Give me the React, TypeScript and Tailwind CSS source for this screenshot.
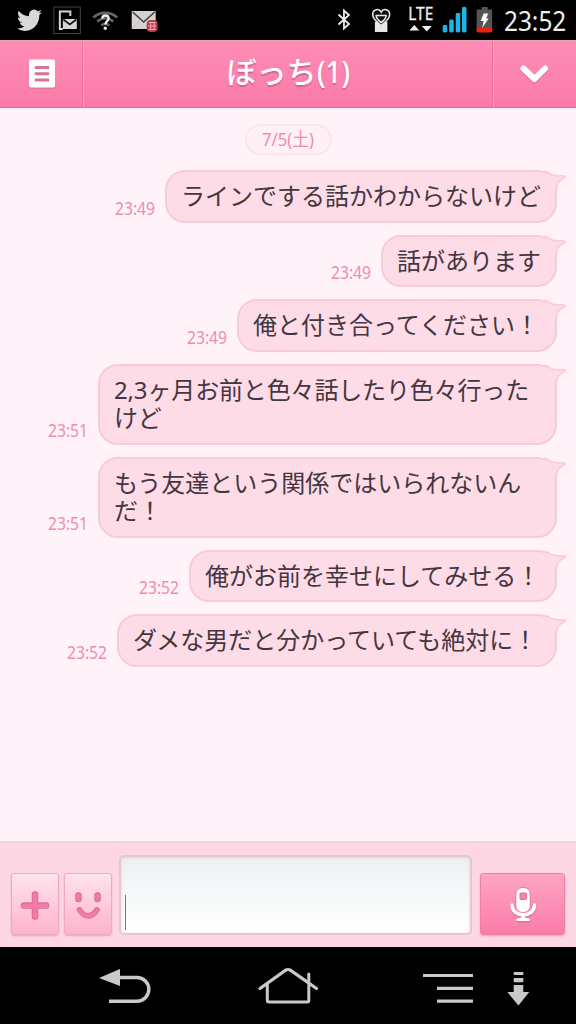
type Message = {
  time: string;
  text: string;
  size: string;
};

const messages: Message[] = [
  { time: "23:49", text: "ラインでする話かわからないけど", size: "w-[392px] h-[52.6px]" },
  { time: "23:49", text: "話があります", size: "w-[176px] h-[52.6px]" },
  { time: "23:49", text: "俺と付き合ってください！", size: "w-[320px] h-[52.6px]" },
  { time: "23:51", text: "2,3ヶ月お前と色々話したり色々行ったけど", size: "w-[459px] h-[81px] tracking-[-0.15px]" },
  { time: "23:51", text: "もう友達という関係ではいられないんだ！", size: "w-[459px] h-[81px]" },
  { time: "23:52", text: "俺がお前を幸せにしてみせる！", size: "w-[368px] h-[52.6px]" },
  { time: "23:52", text: "ダメな男だと分かっていても絶対に！", size: "w-[440px] h-[52.6px]" },
];

const StatusBar = () => {
  return (
    <div className="h-10 bg-black shrink-0 flex items-center text-white">
      <svg width="200" height="40" viewBox="0 0 200 40" fill="none">
        <g transform="translate(17 7.2) scale(1.04 1.09)">
          <path
            fill="#d9d9d9"
            d="M23.95 4.57a10 10 0 0 1-2.82.77 4.96 4.96 0 0 0 2.16-2.72c-.95.55-2 .95-3.13 1.18a4.92 4.92 0 0 0-8.38 4.48C7.69 8.1 4.07 6.13 1.64 3.16a4.93 4.93 0 0 0 1.52 6.57 4.9 4.9 0 0 1-2.23-.61v.06a4.92 4.92 0 0 0 3.95 4.83 5 5 0 0 1-2.21.08 4.94 4.94 0 0 0 4.6 3.42A9.87 9.87 0 0 1 0 19.54a14 14 0 0 0 7.55 2.21c9.05 0 14-7.5 14-13.98 0-.21 0-.42-.02-.63a9.94 9.94 0 0 0 2.42-2.57z"
          />
        </g>
        <rect x="54" y="7" width="26.500" height="26.500" stroke="#454545" />
        <path d="M70.500 16v-4.500H60v17.500h3" stroke="#d5d5d5" strokeWidth="2" />
        <path d="M63 19h14v10H63z" fill="#d5d5d5" />
        <path d="M63.500 19.500l6.500 5 6.500-5" stroke="#111" strokeWidth="1.600" />
        <g stroke="#666" strokeWidth="2.600">
          <path d="M93.500 17.500c7-6.200 17-6.200 24 0" />
          <path d="M97.500 21.500c5-4.300 11-4.300 16 0" />
          <path d="M101.500 25.500c2.500-2 5.500-2 8 0" />
        </g>
        <path d="M102.500 18.500c.2-4.200 6.600-4 6.400 0-.2 2.600-3.300 2.600-3.300 6" stroke="#eee" strokeWidth="2.400" />
        <circle cx="105.500" cy="28.300" r="1.700" fill="#eee" />
        <path d="M132 11h24v18h-24z" fill="#d6d2d2" />
        <path d="M133 12l11 10 11-10" stroke="#443b3d" strokeWidth="1.600" />
        <path d="M133 28l8-8M148 20l5 5" stroke="#bdb6b7" />
        <rect x="147" y="20" width="11" height="12" rx="4" fill="#b93c49" />
        <path d="M149 22.500h7M148.500 26h8M151 22v8M154.500 22v8M149 29.500h7" stroke="#f0b0b5" />
      </svg>
      <svg className="ml-[130px]" width="170" height="40" viewBox="330 0 170 40" fill="none">
        <path d="M338.500 14.500l10.500 9.500-5 4.500V10.500l5 4.500-10.500 9.500" stroke="#eee" strokeWidth="1.800" />
        <path d="M375 22h12.500v10H375z" fill="#e8e8e8" />
        <path d="M381.300 25.500c-3-2.500-8.500-6-8.500-11 0-5.500 6.500-6.500 8.500-2.500 2-4 8.500-3 8.500 2.500 0 5-5.500 8.500-8.500 11z" fill="#111" stroke="#e8e8e8" strokeWidth="1.600" />
        <path d="M381.300 22.500c-2-1.500-5-4-5-7h10c0 3-3 5.500-5 7z" stroke="#e8e8e8" strokeWidth="1.600" />
        <text x="408.500" y="20.500" fill="#eee" stroke="#eee" strokeWidth=".3" fontSize="18.500" textLength="25" lengthAdjust="spacingAndGlyphs" fontFamily="Noto Sans, sans-serif">
          LTE
        </text>
        <path d="M409.500 30.500l5-5.500 5 5.500zM422 26h10l-5 5.500z" fill="#eee" />
        <g fill="#1eb6e6">
          <rect x="443" y="25" width="4.500" height="7.500" rx="1.500" />
          <rect x="449.500" y="19.500" width="4.500" height="13" rx="1.500" />
          <rect x="456" y="13" width="4.500" height="19.500" rx="1.500" />
          <rect x="462.300" y="7" width="4.500" height="25.500" rx="1.500" />
        </g>
        <path d="M482 7h6v2.500h4.500V32H477V9.500h5z" fill="#555" />
        <path d="M477 27.500h15.500v3q0 2-2 2H479q-2 0-2-2z" fill="#ee220c" />
        <path d="M484 13.500h4.500l-2 5h2.500l-6.500 9.500 1.500-7h-3z" fill="#fff" />
      </svg>
      <div className="w-[72px] ml-[5px] text-[28px] leading-10 origin-left scale-x-[0.87] whitespace-nowrap text-[#eeeeee]">
        23:52
      </div>
    </div>
  );
};

const Header = () => {
  return (
    <header className="h-[68px] shrink-0 flex bg-linear-to-b from-[#fe8db6] to-[#fa7aa8] border-t border-t-[#e9a0bb] border-b border-b-[#e06f98]">
      <div className="w-[83px] border-r border-[#e9739d] flex items-center justify-center">
        <svg className="ml-px" width="28" height="32" viewBox="0 0 28 32">
          <rect x="1" y="3" width="26" height="28" rx="2" fill="#dc668f" opacity=".5" />
          <rect x="1" y="1.500" width="26" height="28" rx="2" fill="#fff" />
          <path d="M8 9.500h12M8 15.800h12M8 22.100h12" stroke="#dc7099" strokeWidth="3" strokeLinecap="round" />
        </svg>
      </div>
      <h1 className="flex-1 border-x border-l-[#ff9dc1] border-r-[#e9739d] text-center text-[30px] leading-[62px] font-medium text-white whitespace-nowrap [text-shadow:0_2px_1px_#cf6690]">
        ぼっち<span className="inline-block scale-x-[0.92] origin-left -mr-[3px]">(1)</span>
      </h1>
      <div className="w-[83px] border-l border-[#ff9dc1] flex items-center justify-center">
        <svg width="32" height="24" viewBox="0 0 32 24" fill="none" strokeWidth="6" strokeLinecap="round" strokeLinejoin="round">
          <path d="M4.500 8l11 10.500L26 8" stroke="#dc668f" opacity=".6" />
          <path d="M4.500 6.500l11 10.500L26 6.500" stroke="#fff" />
        </svg>
      </div>
    </header>
  );
};

const Bubble = ({ message }: { message: Message }) => {
  return (
    <div className="flex justify-end items-end pr-[19px]">
      <span className="w-[46px] mb-1 mr-1 text-[18px] leading-[22px] text-[#f08bb0] origin-left scale-x-[0.87]">
        {message.time}
      </span>
      <div
        className={`relative ${message.size} shrink-0 rounded-[20px] border-2 border-[#f8cbda] bg-[#fddbe7] pl-[14px] pr-[8px] pt-[10px] text-[24px] leading-[28px] text-[#443640]`}
      >
        <p className="break-all">{message.text}</p>
        <svg className="absolute -right-[12px] -top-[2px]" width="30" height="24" viewBox="0 0 30 24">
          <path d="M8 2Q12 3 15 5.500Q21 6 28.500 6.500Q21 10 19.300 18L12 14z" fill="#fddbe7" />
          <path d="M7 1.300Q12 2.500 15 5Q20 6 27.500 6Q29.500 6.500 26.500 8.200Q20.500 11 19.300 18" fill="none" stroke="#f8cbda" strokeWidth="1.600" />
        </svg>
      </div>
    </div>
  );
};

const InputBar = () => {
  const keyStyle =
    "h-[62px] rounded-[3px] border border-[#f0a9c1] bg-linear-to-b from-[#ffe3ec] to-[#fdb3cd] shadow-[0_1px_2px_#e8a3bb] flex items-center justify-center";
  return (
    <div className="h-[106px] shrink-0 bg-[#fdd7e4] border-t-2 border-[#f7cfdc] flex items-end pl-[11px] pr-[11px] pb-[12px]">
      <button className={`w-12 mr-[5px] ${keyStyle}`}>
        <svg width="32" height="32" viewBox="0 0 32 32" fill="none" strokeLinecap="round">
          <path d="M5 17.500h22M16 6.500v22" stroke="#dc6891" strokeWidth="6.500" />
          <path d="M5 18h22M16 7v21.500" stroke="#ef7ba6" strokeWidth="4.800" />
        </svg>
      </button>
      <button className={`w-12 mr-[7px] ${keyStyle}`}>
        <svg width="32" height="32" viewBox="0 0 32 32" fill="none" strokeLinecap="round">
          <path d="M6.500 7.500v3.500M25.500 7.500v3.500" stroke="#dc6891" strokeWidth="6.500" />
          <path d="M6.500 8v3M25.500 8v3" stroke="#ef7ba6" strokeWidth="4.800" />
          <path d="M7.500 22q8.500 12 17.500 0" stroke="#dc6891" strokeWidth="5.500" />
          <path d="M7.500 22.300q8.500 12 17.500 0" stroke="#ef7ba6" strokeWidth="4" />
        </svg>
      </button>
      <div className="w-[353px] h-[80px] mr-[8px] rounded-[5px] border-2 border-[#e9c5d1] bg-linear-to-b from-[#edf0f2] via-[#f6f8f9] to-white flex items-end pl-[4px] pb-[3px] shadow-[inset_0_1px_3px_#d5d9dc]">
        <span className="w-px h-[35px] bg-[#777]" />
      </div>
      <button className="flex-1 h-[62px] rounded-[3px] border border-[#ee7fa5] bg-linear-to-b from-[#fea4c4] to-[#fb7caa] shadow-[0_1px_2px_#e8a3bb] flex items-center justify-center">
        <svg width="30" height="38" viewBox="0 0 30 38" fill="none">
          <g stroke="#d9668f" strokeLinecap="round" opacity=".6">
            <path d="M4 20.500c0 14 22.500 14 22.500 0" strokeWidth="4.500" />
            <path d="M10 36h11" strokeWidth="3.500" />
          </g>
          <rect x="7.800" y="2.500" width="14.500" height="25" rx="6.500" fill="#fff" stroke="#dc779c" />
          <rect x="12" y="8" width="6.500" height="6.500" rx="1" fill="#f884ad" stroke="#d96f95" />
          <path d="M4 20c0 13 22.500 13 22.500 0" stroke="#fff" strokeWidth="3.500" strokeLinecap="round" />
          <path d="M13.500 29h3.500v3.500l5 1.500v2H8.500V34l5-1.500z" fill="#fff" />
        </svg>
      </button>
    </div>
  );
};

const NavBar = () => {
  return (
    <nav className="h-[77px] shrink-0 bg-black">
      <svg width="576" height="77" viewBox="0 947 576 77" fill="none" stroke="#c9c9c9" strokeWidth="3.400">
        <path d="M118 977.500h19a11.800 11.800 0 0 1 0 23.700h-28" />
        <path d="M99 978l21-9v17z" fill="#c9c9c9" stroke="none" />
        <path d="M260 988.500l26-18.500q2-1 4 0l26.500 18.500" strokeLinecap="round" strokeWidth="3.200" />
        <path d="M267.300 984v16.500q0 1.500 1.500 1.500h38.500q1.500 0 1.500-1.500V974" strokeLinecap="round" strokeWidth="3" />
        <path d="M423 975.500h50M437 988.300h36M437 1001.200h36" strokeWidth="3.200" />
        <path d="M513.700 972h9.600v3h-9.600zM513.700 978h9.600v4.200h-9.600zM513.700 985h9.600v7h6l-10.900 13.500-11-13.500h6.300z" fill="#c9c9c9" stroke="none" />
      </svg>
    </nav>
  );
};

const App = () => {
  return (
    <div className="w-[576px] h-[1024px] flex flex-col overflow-hidden bg-[#fff2f9] font-['Noto_Sans','Noto_Sans_CJK_JP',sans-serif]">
      <StatusBar />
      <Header />
      <main className="flex-1 min-h-0 flex flex-col">
        <div className="mt-[16px] mb-[15px] h-[31px] w-[87px] self-center rounded-full border-2 border-[#fbe6ec] bg-[#fff0f5] text-center text-[18px] leading-[27px] text-[#f08bb0]">
          <span className="inline-block scale-x-[0.93] -mx-2 whitespace-nowrap">7/5(土)</span>
        </div>
        <div className="flex flex-col gap-3">
          {messages.map((message) => (
            <Bubble key={message.text} message={message} />
          ))}
        </div>
      </main>
      <InputBar />
      <NavBar />
    </div>
  );
};

export default App;
